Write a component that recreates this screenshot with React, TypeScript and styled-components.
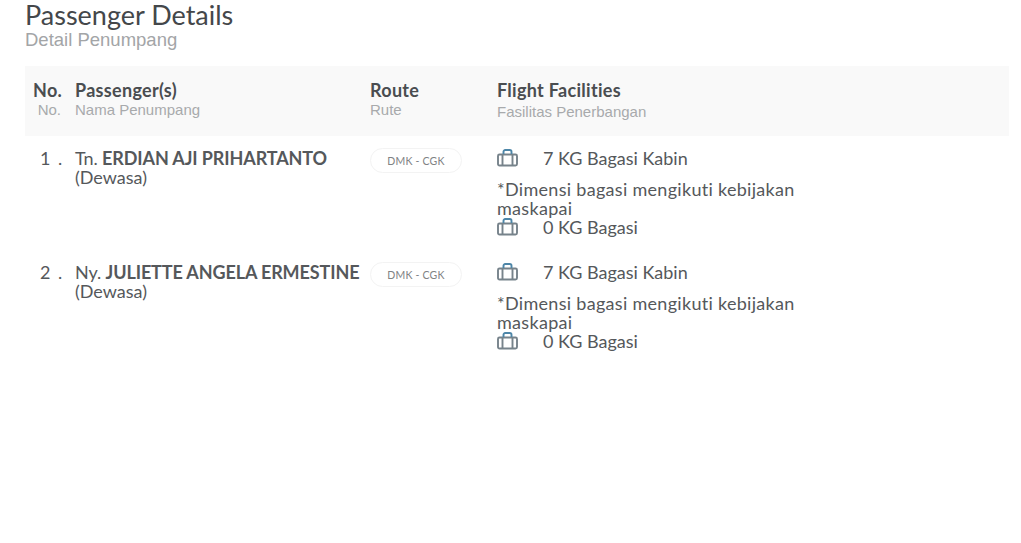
import React from "react";
import styled, { createGlobalStyle } from "styled-components";

const Global = createGlobalStyle`
  html, body { margin: 0; padding: 0; background: #fff; }
`;

const Page = styled.div`
  width: 1021px;
  height: 543px;
  box-sizing: border-box;
  padding: 0 12px 0 25px;
  overflow: hidden;
  font-family: Lato, "Open Sans", sans-serif;
  color: #4a4d50;
`;

const Title = styled.h1`
  margin: 0;
  font-size: 27px;
  line-height: 29px;
  font-weight: 400;
  color: #44474a;
`;

const Subtitle = styled.div`
  font-family: "Liberation Sans", Arial, sans-serif;
  font-size: 18.5px;
  line-height: 21px;
  color: #a3a5a7;
  margin-bottom: 16px;
`;

const columns = `
  display: grid;
  grid-template-columns: 42px 295px 127px 1fr;
  padding-left: 8px;
`;

const HeaderRow = styled.div`
  ${columns}
  height: 70px;
  box-sizing: border-box;
  padding-top: 14px;
  background: #f9f9f9;
`;

const HeadCell = styled.div<{ $right?: boolean }>`
  text-align: ${(p) => (p.$right ? "right" : "left")};
  padding-right: ${(p) => (p.$right ? "14px" : "0")};
`;

const HeadMain = styled.div`
  font-size: 18px;
  line-height: 20px;
  font-weight: 700;
  letter-spacing: 0.3px;
  color: #4a4d50;
  white-space: nowrap;
`;

const HeadSub = styled.div<{ $low?: boolean }>`
  font-family: "Liberation Sans", Arial, sans-serif;
  font-size: 15px;
  line-height: 18px;
  margin-top: ${(p) => (p.$low ? "3px" : "1px")};
  color: #a8aaac;
  white-space: nowrap;
`;

const Row = styled.div`
  ${columns}
  height: 114px;
  box-sizing: border-box;
  padding-top: 12px;
`;

const RowNumber = styled.div`
  font-size: 18px;
  line-height: 20px;
  letter-spacing: 1.5px;
  padding-left: 7px;
  white-space: pre;
  color: #55585b;
`;

const PassengerName = styled.div`
  font-size: 18px;
  line-height: 20px;
  letter-spacing: -0.12px;
  white-space: nowrap;
  color: #55585b;

  b {
    font-weight: 700;
  }
`;

const PassengerType = styled.div`
  font-size: 18px;
  line-height: 19px;
  color: #55585b;
`;

const RouteBadge = styled.div`
  width: 92px;
  height: 25px;
  box-sizing: border-box;
  border: 1px solid #f3f3f3;
  border-radius: 13px;
  font-size: 10.5px;
  line-height: 25px;
  letter-spacing: 0.2px;
  text-align: center;
  color: #808284;
`;

const Facility = styled.div`
  display: flex;
  align-items: center;
  height: 20px;
  font-size: 18px;
  line-height: 20px;
  color: #55585b;
`;

const FacilityLabel = styled.span`
  margin-left: 25px;
`;

const Note = styled.div`
  width: 310px;
  margin: 12px 0 -1px;
  font-size: 18px;
  line-height: 19px;
  letter-spacing: 0.3px;
  color: #55585b;
`;

const Bag = () => (
  <svg width="21" height="18" viewBox="0 0 21 18" fill="none" strokeWidth="1.9">
    <rect x="1" y="5.5" width="19" height="11" rx="1.5" stroke="#77838b" />
    <path d="M5.5 5.5v11M15.5 5.5v11" stroke="#77838b" />
    <path d="M6.5 5V2.8C6.5 1.8 7.2 1 8.2 1h4.6c1 0 1.7.8 1.7 1.8V5" stroke="#4d86a8" />
  </svg>
);

const passengers = [
  { no: "1 .", title: "Tn.", name: "ERDIAN AJI PRIHARTANTO" },
  { no: "2 .", title: "Ny.", name: "JULIETTE ANGELA ERMESTINE" },
];

export default function App() {
  return (
    <Page>
      <Global />
      <Title>Passenger Details</Title>
      <Subtitle>Detail Penumpang</Subtitle>
      <HeaderRow>
        <HeadCell $right>
          <HeadMain>No.</HeadMain>
          <HeadSub>No.</HeadSub>
        </HeadCell>
        <HeadCell>
          <HeadMain>Passenger(s)</HeadMain>
          <HeadSub>Nama Penumpang</HeadSub>
        </HeadCell>
        <HeadCell>
          <HeadMain>Route</HeadMain>
          <HeadSub>Rute</HeadSub>
        </HeadCell>
        <HeadCell>
          <HeadMain>Flight Facilities</HeadMain>
          <HeadSub $low>Fasilitas Penerbangan</HeadSub>
        </HeadCell>
      </HeaderRow>
      {passengers.map((p) => (
        <Row key={p.no}>
          <RowNumber>{p.no}</RowNumber>
          <div>
            <PassengerName>
              {p.title} <b>{p.name}</b>
            </PassengerName>
            <PassengerType>(Dewasa)</PassengerType>
          </div>
          <RouteBadge>DMK - CGK</RouteBadge>
          <div>
            <Facility>
              <Bag />
              <FacilityLabel>7 KG Bagasi Kabin</FacilityLabel>
            </Facility>
            <Note>*Dimensi bagasi mengikuti kebijakan maskapai</Note>
            <Facility>
              <Bag />
              <FacilityLabel>0 KG Bagasi</FacilityLabel>
            </Facility>
          </div>
        </Row>
      ))}
    </Page>
  );
}
